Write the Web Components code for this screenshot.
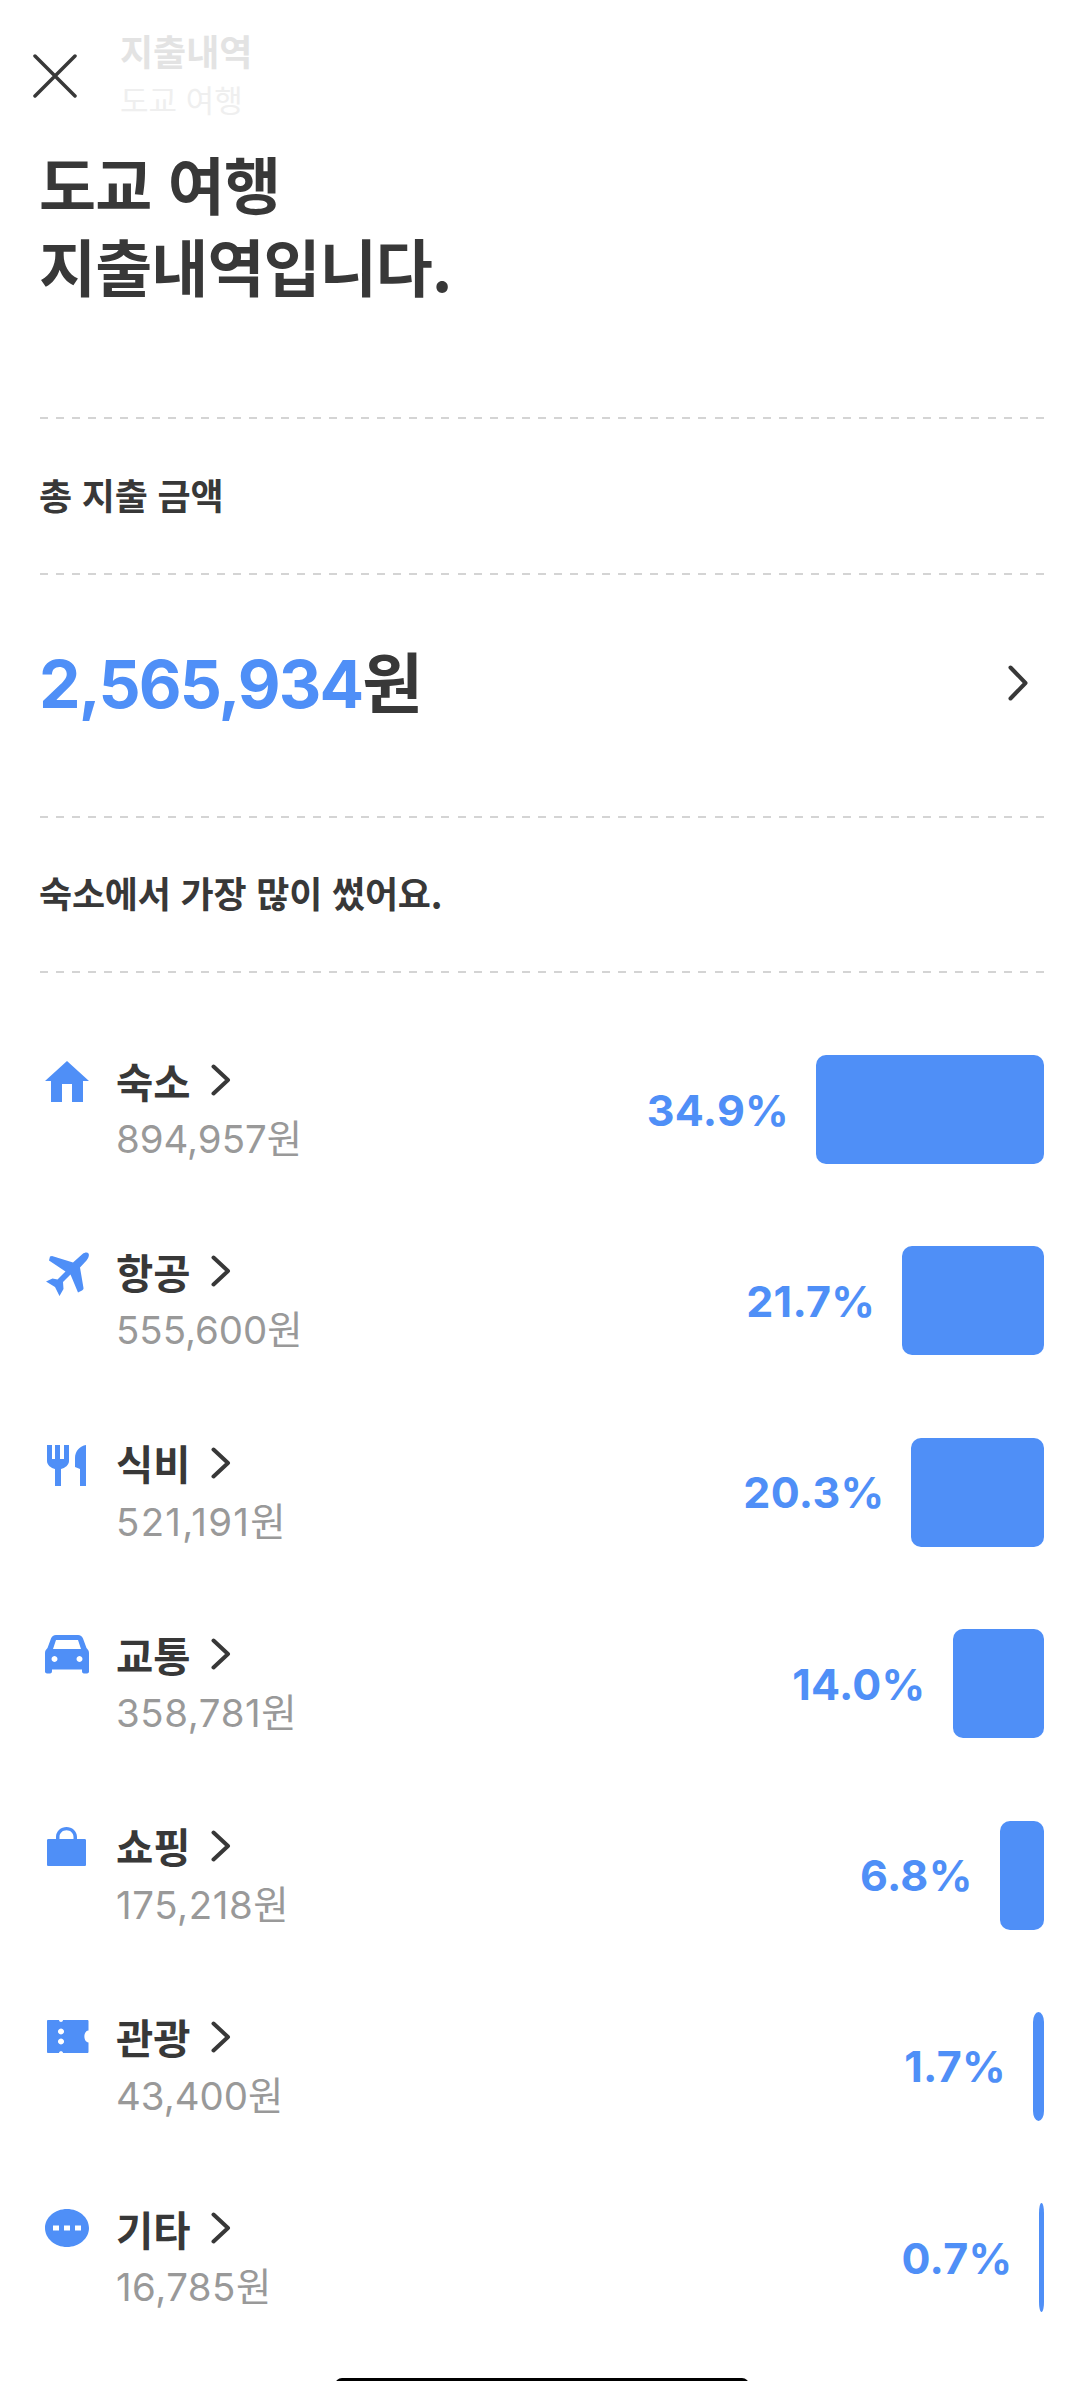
<!DOCTYPE html>
<html lang="ko">
<head>
<meta charset="utf-8">
<title>지출내역</title>
<style>
  html, body { margin: 0; background: #fff; }
  body { width: 1080px; height: 2381px; overflow: hidden; position: relative; font-family: Inter, "Noto Sans CJK KR", sans-serif; color: #383838; }
</style>
</head>
<body>
<app-header title-text="지출내역" sub-text="도교 여행"></app-header>
<app-headline>도교 여행<br>지출내역입니다.</app-headline>
<app-section>
  <span slot="top">총 지출 금액</span>
  <app-total amount="2,565,934"></app-total>
</app-section>
<app-section style="--top-h: 153px">
  <span slot="top">숙소에서 가장 많이 썼어요.</span>
</app-section>
<app-list>
  <app-row label="숙소" amount="894,957원" pct="34.9" icon="home"></app-row>
  <app-row label="항공" amount="555,600원" pct="21.7" icon="plane"></app-row>
  <app-row label="식비" amount="521,191원" pct="20.3" icon="food" style="--amount-ls: 1.300px"></app-row>
  <app-row label="교통" amount="358,781원" pct="14.0" icon="car" style="--amount-ls: .600px"></app-row>
  <app-row label="쇼핑" amount="175,218원" pct="6.8" icon="bag" style="--amount-ls: .600px"></app-row>
  <app-row label="관광" amount="43,400원" pct="1.7" icon="ticket"></app-row>
  <app-row label="기타" amount="16,785원" pct="0.7" icon="more" style="--amount-ls: .500px"></app-row>
</app-list>
<app-home-bar></app-home-bar>

<script>
const BLUE = '#4f8ff7';
const KR = '"Noto Sans CJK KR", sans-serif';
const NUM = 'Inter, "Noto Sans CJK KR", sans-serif';

const ICONS = {
  home: '<path d="M22 0 44 20H38V41H27V23H17V41H6V20H0Z"/>',
  plane: '<path d="M37.500 2C39.500 .5 42.500 0 43.500 1.500 44.500 3 43.500 6 41.500 8.500L35 15.500 38.500 36C38.600 37 38 38 37 38.500L33 40.500 25.500 22.500 18 30 18.500 37 14.500 44 10 35 1 29.500 7.500 26.500 12.500 27.500 20.500 19.500 4 8.500 5 4.500 7 4 28 10.500Z"/>',
  food: '<path d="M0 0H5V14H8V0H13V14H17V0H22V16C22 20 18 23 14 24V41H8V24C4 23 0 20 0 16Z"/><path d="M39 0V41H33V24L28 22V13C28 6 33 1 39 0Z"/>',
  car: '<path fill-rule="evenodd" d="M11 0H33C35.500 0 37 1.200 38 3.500L41.500 13C43 14.500 44 16 44 18V36.500C44 37.800 43 38.500 42 38.500H39C37.500 38.500 37 37.500 37 36V34.500H7V36C7 37.500 6.500 38.500 5 38.500H2C1 38.500 0 37.800 0 36.500V18C0 16 1 14.500 2.500 13L6 3.500C7 1.200 8.500 0 11 0ZM11 5 8 14H36L33 5ZM9.500 21a3 3 0 1 0 .01 0ZM34.500 21a3 3 0 1 0 .01 0Z"/>',
  bag: '<path fill-rule="evenodd" d="M9 12V10C9 4 14 0 19.500 0S30 4 30 10V12H37.500C38.500 12 39 12.500 39 13.500V37.500C39 38.500 38.500 39 37.500 39H1.500C.5 39 0 38.500 0 37.500V13.500C0 12.500 .5 12 1.500 12ZM12.500 12H26.500V10C26.500 6 23.500 3.200 19.500 3.200S12.500 6 12.500 10Z"/>',
  ticket: '<path fill-rule="evenodd" d="M1 0H12C12 2.500 16 2.500 16 0H40.500C41 0 41.500 .5 41.500 1V10.500C36 11 36 22 41.500 22.500V32C41.500 32.500 41 33 40.500 33H16C16 30.500 12 30.500 12 33H1C.5 33 0 32.500 0 32V1C0 .5 .5 0 1 0ZM14 8.500a3 3 0 1 0 .01 0ZM14 18.500a3 3 0 1 0 .01 0Z"/>',
  more: '<path fill-rule="evenodd" d="M22 0C34 0 44 8.500 44 19S34 38 22 38 0 29.500 0 19 10 0 22 0ZM8 16.500V21.500H14V16.500ZM19 16.500V21.500H25V16.500ZM30 16.500V21.500H36V16.500Z"/>'
};
const ICON_BOX = {
  home: [44, 41, 0, 0], plane: [44, 44, 0, 0], food: [39, 41, 2, 1],
  car: [44, 39, 0, 0], bag: [39, 39, 2, 0], ticket: [42, 33, 2, 2], more: [44, 38, 0, 0]
};

class AppHeader extends HTMLElement {
  constructor() {
    super();
    this.attachShadow({ mode: 'open' });
    this.shadowRoot.innerHTML = `
      <style>
        :host { display: flex; align-items: flex-start; height: 141px; padding: 30px 0 0 33px; box-sizing: border-box; font-family: ${KR}; }
        svg { margin-top: 24px; flex: none; }
        .text { margin-left: 43px; display: flex; flex-direction: column; }
        .title { font-size: 36px; font-weight: 700; line-height: 40px; color: #e3e3e3; }
        .sub { font-size: 31px; line-height: 40px; margin-top: 9px; color: #efefef; }
      </style>
      <svg width="44" height="44" viewBox="0 0 44 44" fill="none" stroke="#383838" stroke-width="3.500" stroke-linecap="round"><path d="M2 2 42 42M42 2 2 42"/></svg>
      <div class="text">
        <div class="title">${this.getAttribute('title-text')}</div>
        <div class="sub">${this.getAttribute('sub-text')}</div>
      </div>`;
  }
}
customElements.define('app-header', AppHeader);

class AppHeadline extends HTMLElement {
  constructor() {
    super();
    this.attachShadow({ mode: 'open' });
    this.shadowRoot.innerHTML = `
      <style>
        :host { display: block; height: 275px; margin: 1px 36px 0 39px; font-family: ${KR}; font-size: 62px; font-weight: 700; line-height: 82px; color: #383838; letter-spacing: -.9px; }
      </style>
      <slot></slot>`;
  }
}
customElements.define('app-headline', AppHeadline);

// dashed rule drawn with a gradient, the border dash is too fine
const DASH = 'height: 2px; background: repeating-linear-gradient(90deg, #d4d4d4 0 8px, transparent 8px 16.060px);';

class AppSection extends HTMLElement {
  constructor() {
    super();
    this.attachShadow({ mode: 'open' });
    this.shadowRoot.innerHTML = `
      <style>
        :host { display: block; margin: 0 36px 0 40px; font-family: ${KR}; }
        .rule { ${DASH} }
        .top { height: var(--top-h, 154px); box-sizing: border-box; padding-bottom: 5px; margin-left: -1px; display: flex; align-items: center; font-size: 36px; font-weight: 700; letter-spacing: -.2px; color: #383838; }
      </style>
      <div class="rule"></div>
      <div class="top"><slot name="top"></slot></div>
      <div class="rule"></div>
      <slot></slot>`;
  }
}
customElements.define('app-section', AppSection);

class AppTotal extends HTMLElement {
  constructor() {
    super();
    this.attachShadow({ mode: 'open' });
    this.shadowRoot.innerHTML = `
      <style>
        :host { display: flex; align-items: center; justify-content: space-between; height: 241px; padding: 0 16px 0 0; box-sizing: border-box; }
        .sum { font-size: 66px; font-weight: 700; font-family: ${NUM}; color: ${BLUE}; margin: -33px 0 0 -1px; letter-spacing: -1.900px; }
        .unit { color: #383838; font-family: ${KR}; letter-spacing: 0; }
        svg { margin-top: -25px; }
      </style>
      <div class="sum">${this.getAttribute('amount')}<span class="unit">원</span></div>
      <svg width="20" height="36" viewBox="0 0 20 36" fill="none" stroke="#383838" stroke-width="4" stroke-linecap="round" stroke-linejoin="round"><path d="M2.500 2.500 17.500 18 2.500 33.500"/></svg>`;
  }
}
customElements.define('app-total', AppTotal);

class AppList extends HTMLElement {
  constructor() {
    super();
    this.attachShadow({ mode: 'open' });
    this.shadowRoot.innerHTML = `
      <style>
        :host { display: flex; flex-direction: column; gap: 82.400px; margin: 82px 36px 0 45px; }
      </style>
      <slot></slot>`;
  }
}
customElements.define('app-list', AppList);

class AppRow extends HTMLElement {
  constructor() {
    super();
    const pct = parseFloat(this.getAttribute('pct'));
    const name = this.getAttribute('icon');
    const [w, h, dx, dy] = ICON_BOX[name];
    this.attachShadow({ mode: 'open' });
    this.shadowRoot.innerHTML = `
      <style>
        :host { display: flex; align-items: center; height: 109px; font-family: ${KR}; }
        .icon { flex: none; width: 71px; height: 109px; padding-top: ${6 + dy}px; padding-left: ${dx}px; box-sizing: border-box; }
        .icon svg { display: block; fill: ${BLUE}; }
        .info { flex: 1; align-self: flex-start; margin-top: -1px; }
        .label { display: flex; align-items: center; gap: 20px; height: 52px; font-size: 40.500px; font-weight: 700; color: #383838; }
        .label svg { flex: none; }
        .amount { font-family: ${NUM}; font-size: 38.400px; line-height: 48px; margin-top: 9px; color: #999; letter-spacing: var(--amount-ls, 0); }
        .pct { font-family: ${NUM}; font-size: 43px; font-weight: 700; color: ${BLUE}; margin-right: 27px; letter-spacing: .3px; }
        .bar { flex: none; width: calc(${pct} * 6.530px); height: 109px; background: ${BLUE}; border-radius: min(10px, 50%) / 10px; }
      </style>
      <div class="icon"><svg width="${w}" height="${h}" viewBox="0 0 ${w} ${h}">${ICONS[name]}</svg></div>
      <div class="info">
        <div class="label">${this.getAttribute('label')}
          <svg width="20" height="32" viewBox="0 0 20 32" fill="none" stroke="#383838" stroke-width="4" stroke-linecap="round" stroke-linejoin="round"><path d="M2.500 2.500 17 16 2.500 29.500"/></svg>
        </div>
        <div class="amount">${this.getAttribute('amount')}</div>
      </div>
      <div class="pct">${this.getAttribute('pct')}%</div>
      <div class="bar"></div>`;
  }
}
customElements.define('app-row', AppRow);

class AppHomeBar extends HTMLElement {
  constructor() {
    super();
    this.attachShadow({ mode: 'open' });
    this.shadowRoot.innerHTML = `
      <style>
        :host { position: absolute; left: 335px; bottom: -11px; width: 414px; height: 14px; background: #000; border-radius: 7px; }
      </style>`;
  }
}
customElements.define('app-home-bar', AppHomeBar);
</script>
</body>
</html>
